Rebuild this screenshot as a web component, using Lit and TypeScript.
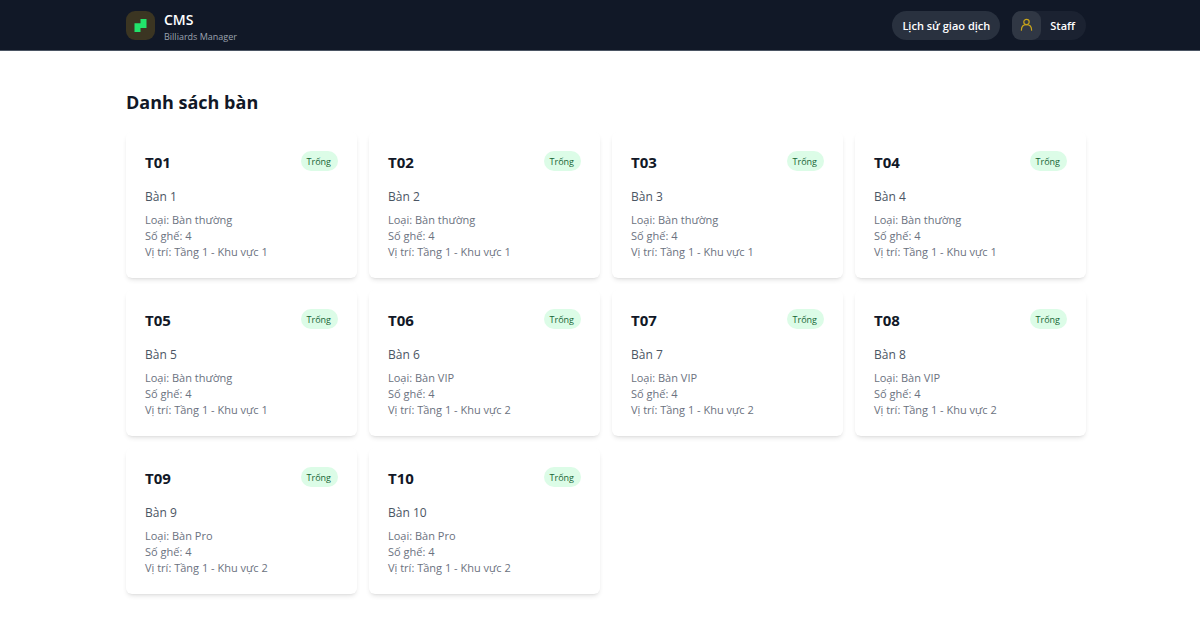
import { LitElement, html, css } from "lit";
import { customElement, property } from "lit/decorators.js";

interface Table {
  code: string;
  name: string;
  kind: string;
  seats: number;
  place: string;
}

const kinds = ["thường", "thường", "thường", "thường", "thường", "VIP", "VIP", "VIP", "Pro", "Pro"];

const tables: Table[] = kinds.map((kind, i) => ({
  code: `T${String(i + 1).padStart(2, "0")}`,
  name: `Bàn ${i + 1}`,
  kind: `Bàn ${kind}`,
  seats: 4,
  place: `Tầng 1 - Khu vực ${i < 5 ? 1 : 2}`,
}));

@customElement("table-card")
class TableCard extends LitElement {
  @property({ attribute: false }) table!: Table;

  static styles = css`
    :host {
      display: block;
    }
    .card {
      padding: 19px 19px 18px;
      border-radius: 6px;
      background: #fff;
      box-shadow: 0 3px 5px -1px rgba(0, 0, 0, 0.1), 0 2px 3px -2px rgba(0, 0, 0, 0.1);
    }
    .top {
      display: flex;
      justify-content: space-between;
      align-items: flex-start;
      margin-bottom: 14px;
    }
    .code {
      margin: 0;
      font-size: 15px;
      line-height: 22px;
      font-weight: 700;
      color: #111827;
    }
    .badge {
      padding: 1px 7px 0 6px;
      border-radius: 10px;
      background: #dcfce7;
      color: #166534;
      font-size: 9px;
      line-height: 19px;
      font-weight: 500;
    }
    .name {
      margin: 0 0 5px;
      font-size: 12px;
      line-height: 20px;
      color: #4b5563;
    }
    .line {
      margin: 0;
      font-size: 11px;
      line-height: 16px;
      color: #6b7280;
    }
  `;

  render() {
    const t = this.table;
    return html`
      <article class="card">
        <div class="top">
          <h2 class="code">${t.code}</h2>
          <span class="badge">Trống</span>
        </div>
        <p class="name">${t.name}</p>
        <p class="line">Loại: ${t.kind}</p>
        <p class="line">Số ghế: ${t.seats}</p>
        <p class="line">Vị trí: ${t.place}</p>
      </article>
    `;
  }
}

@customElement("app-root")
class AppRoot extends LitElement {
  static styles = css`
    :host {
      display: block;
      min-height: 100vh;
      background: #fff;
      font-family: "Open Sans", "Noto Sans", sans-serif;
    }
    .header {
      padding-left: 12px;
      background: #111827;
      border-bottom: 1px solid #4b5563;
    }
    .bar {
      display: flex;
      justify-content: space-between;
      align-items: center;
      max-width: 960px;
      height: 50px;
      margin: 0 auto;
    }
    .brand {
      display: flex;
      align-items: center;
      gap: 9px;
      color: #fff;
      text-decoration: none;
    }
    .logo,
    .avatar {
      display: flex;
      align-items: center;
      justify-content: center;
      width: 29px;
      height: 29px;
      border-radius: 9px;
      background: #3b3522;
    }
    .names {
      display: flex;
      flex-direction: column;
      padding-top: 5px;
    }
    .title {
      font-size: 14px;
      line-height: 18px;
      font-weight: 600;
    }
    .sub {
      font-size: 9px;
      line-height: 16px;
      color: #9ca3af;
    }
    .actions {
      display: flex;
      align-items: center;
      gap: 12px;
    }
    .history,
    .user {
      height: 29px;
      border: 0;
      border-radius: 15px;
      color: #fff;
      font-family: inherit;
      font-size: 11px;
      font-weight: 600;
      cursor: pointer;
    }
    .history {
      padding: 0 10px;
      background: #29313f;
    }
    .user {
      display: flex;
      align-items: center;
      gap: 9px;
      padding: 0 11px 0 0;
      background: #1b2231;
    }
    .avatar {
      background: #303744;
    }
    .main {
      padding: 38px 0 38px 12px;
    }
    .wrap {
      max-width: 960px;
      margin: 0 auto;
    }
    .heading {
      margin: 0 0 17px;
      font-size: 18px;
      line-height: 26px;
      font-weight: 700;
      color: #111827;
    }
    .grid {
      display: grid;
      grid-template-columns: repeat(4, 1fr);
      gap: 12px;
    }
  `;

  render() {
    return html`
      <header class="header">
        <div class="bar">
          <a class="brand" href="#">
            <span class="logo">
              <svg width="13" height="13" viewBox="0 0 13 13" aria-hidden="true">
                <path d="M6.5 0H12.5V9H6.5V13H.5V4.3H6.5z" fill="#22e36b" />
              </svg>
            </span>
            <span class="names">
              <span class="title">CMS</span>
              <span class="sub">Billiards Manager</span>
            </span>
          </a>
          <div class="actions">
            <button class="history" type="button">Lịch sử giao dịch</button>
            <button class="user" type="button">
              <span class="avatar">
                <svg width="13" height="14" viewBox="0 0 13 14" fill="none" stroke="#c9a51b" stroke-width="1.2" stroke-linecap="round" aria-hidden="true">
                  <circle cx="6.5" cy="4" r="2.7" />
                  <path d="M1.4 12.2c0-3.3 2.1-5.5 5.1-5.5s5.1 2.2 5.1 5.5" />
                </svg>
              </span>
              <span>Staff</span>
            </button>
          </div>
        </div>
      </header>
      <main class="main">
        <div class="wrap">
          <h1 class="heading">Danh sách bàn</h1>
          <div class="grid">
            ${tables.map((t) => html`<table-card .table=${t}></table-card>`)}
          </div>
        </div>
      </main>
    `;
  }
}
